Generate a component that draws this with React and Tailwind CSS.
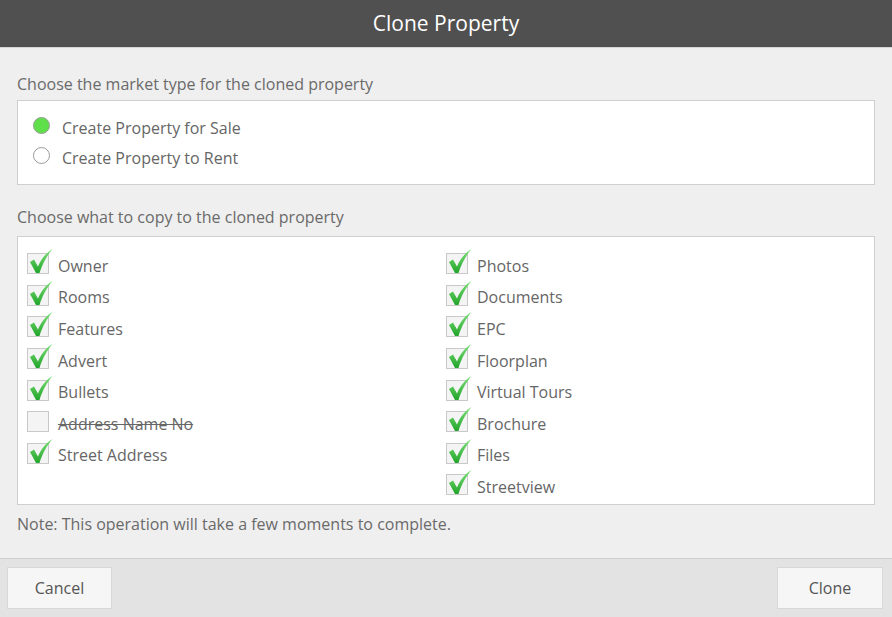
import React from "react";

const font = { fontFamily: '"Open Sans", "Noto Sans", sans-serif' };

function Check({ checked }) {
  return (
    <div className="relative w-[22px] h-[21px] border border-[#c9c9c9] bg-[#f4f4f4] shrink-0">
      {checked && (
        <svg className="absolute left-[1px] top-[-6px]" width="24" height="26" viewBox="0 0 24 26">
          <defs>
            <linearGradient id="cg" x1="0" y1="0" x2="0" y2="1">
              <stop offset="0" stopColor="#7fe07a" />
              <stop offset="1" stopColor="#21a52a" />
            </linearGradient>
          </defs>
          <path d="M1 14 L5 11.5 L9 18.5 C12 11 17 5 23.5 1 C18.5 7 13.5 15 10.5 25 L7 25 Z" fill="url(#cg)" />
        </svg>
      )}
    </div>
  );
}

function Row({ label, checked, strike }) {
  return (
    <div className="flex items-center h-[31.6px] gap-[9px]">
      <Check checked={checked} />
      <span className={"text-[16px] text-[#666] mt-[4px] " + (strike ? "line-through" : "")}>{label}</span>
    </div>
  );
}

export default function App() {
  const left = [
    ["Owner", true],
    ["Rooms", true],
    ["Features", true],
    ["Advert", true],
    ["Bullets", true],
    ["Address Name No", false, true],
    ["Street Address", true],
  ];
  const right = [
    ["Photos", true],
    ["Documents", true],
    ["EPC", true],
    ["Floorplan", true],
    ["Virtual Tours", true],
    ["Brochure", true],
    ["Files", true],
    ["Streetview", true],
  ];
  return (
    <div className="w-[892px] h-[617px] flex flex-col bg-[#efefef]" style={font}>
      <div className="h-[48px] bg-[#505050] border-b border-[#d6d6d6] flex items-center justify-center text-white text-[21px] shrink-0">
        Clone Property
      </div>
      <div className="flex-1 px-[17px] pt-[25px]">
        <div className="text-[16px] text-[#6a6a6a] leading-[22px]">Choose the market type for the cloned property</div>
        <div className="mt-[5px] h-[85px] bg-white border border-[#cfcfcf] pl-[15px] pt-[12px]">
          <div className="flex items-center h-[30px] gap-[12px]">
            <div className="w-[17px] h-[17px] rounded-full bg-[#5fe04a] border border-[#9a9a9a] -mt-[5px]" />
            <span className="text-[16px] text-[#666]">Create Property for Sale</span>
          </div>
          <div className="flex items-center h-[30px] gap-[12px]">
            <div className="w-[17px] h-[17px] rounded-full bg-white border border-[#9a9a9a] -mt-[5px]" />
            <span className="text-[16px] text-[#666]">Create Property to Rent</span>
          </div>
        </div>
        <div className="mt-[21px] text-[16px] text-[#6a6a6a] leading-[22px]">Choose what to copy to the cloned property</div>
        <div className="mt-[8px] h-[269px] bg-white border border-[#cfcfcf] pl-[9px] pt-[11px] grid grid-cols-[419px_1fr]">
          <div className="flex flex-col">
            {left.map(([l, c, s]) => (
              <Row key={l} label={l} checked={c} strike={s} />
            ))}
          </div>
          <div className="flex flex-col">
            {right.map(([l, c]) => (
              <Row key={l} label={l} checked={c} />
            ))}
          </div>
        </div>
        <div className="mt-[8px] text-[16px] text-[#6a6a6a] leading-[22px]">Note: This operation will take a few moments to complete.</div>
      </div>
      <div className="h-[59px] bg-[#e3e3e3] border-t border-[#cfcfcf] flex items-center justify-between pl-[7px] pr-[9px] shrink-0">
        <button className="w-[105px] h-[42px] bg-[#f6f6f6] border border-[#d8d8d8] text-[16px] text-[#555]">Cancel</button>
        <button className="w-[106px] h-[42px] bg-[#f6f6f6] border border-[#d8d8d8] text-[16px] text-[#555]">Clone</button>
      </div>
    </div>
  );
}
